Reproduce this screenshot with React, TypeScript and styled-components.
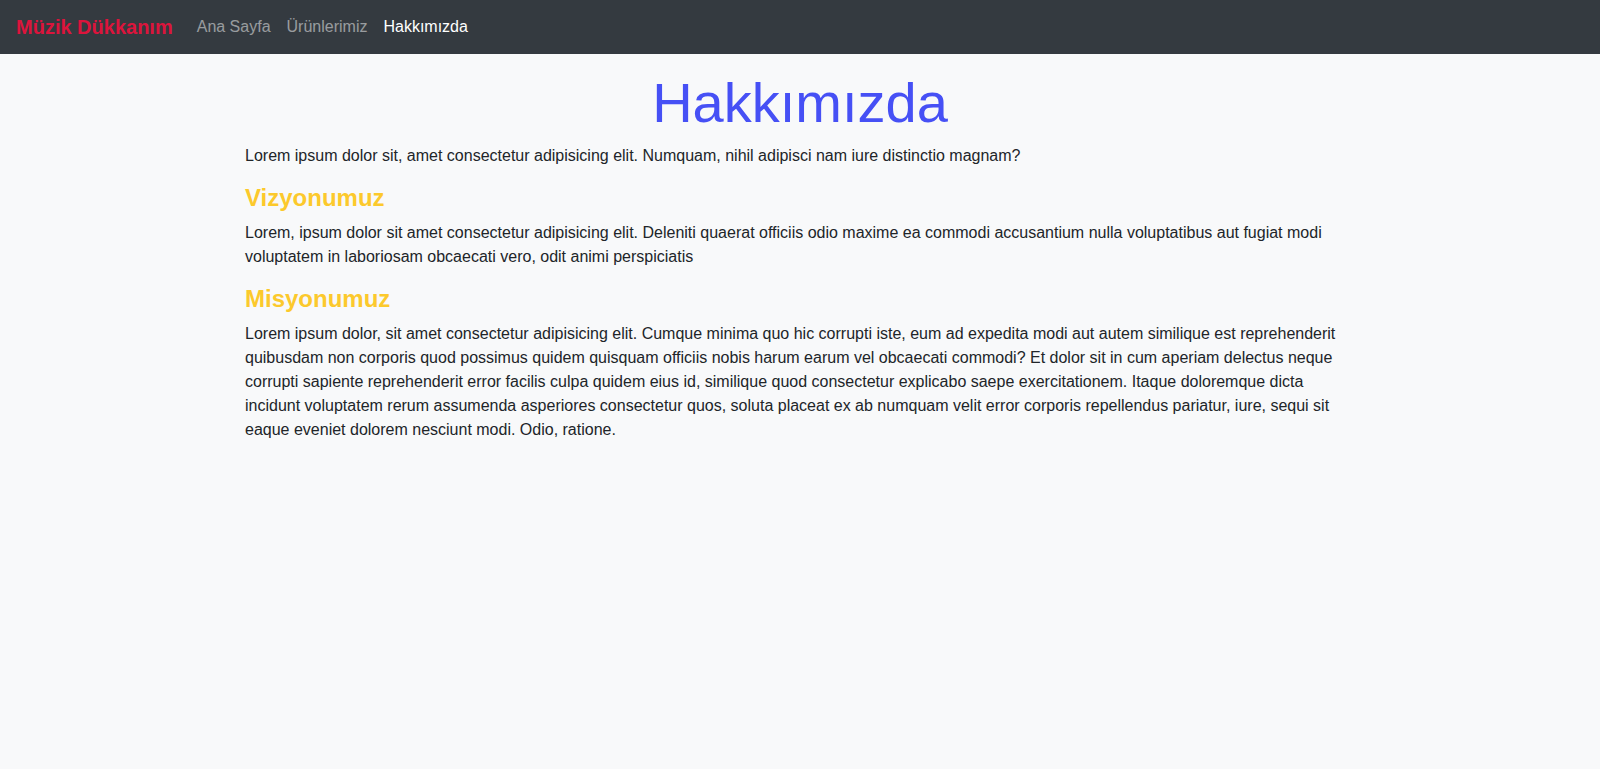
import React from "react";
import styled, { createGlobalStyle } from "styled-components";

const GlobalStyle = createGlobalStyle`
  html, body { margin: 0; padding: 0; }
  body {
    background: #f8f9fa;
    color: #212529;
    font-family: "Liberation Sans", Arial, sans-serif;
    font-size: 16px;
    line-height: 1.5;
  }
  * { box-sizing: border-box; }
`;

const Page = styled.div`
  min-height: 769px;
  background: #f8f9fa;
`;

const Navbar = styled.nav`
  display: flex;
  align-items: center;
  height: 54px;
  padding: 0 16px;
  background: #343a40;
`;

const Brand = styled.a`
  font-size: 20px;
  font-weight: bold;
  color: crimson;
  margin-right: 16px;
  text-decoration: none;
  line-height: 30px;
`;

const NavList = styled.ul`
  display: flex;
  list-style: none;
  margin: 0;
  padding: 0;
`;

const NavLink = styled.a<{ $active?: boolean }>`
  display: block;
  padding: 8px;
  line-height: 24px;
  text-decoration: none;
  color: ${(p) => (p.$active ? "#fff" : "rgba(255,255,255,0.5)")};
`;

const Container = styled.main`
  width: 1140px;
  margin: 0 auto;
  padding: 15px 15px 0;
`;

const Title = styled.h1`
  margin: 0 0 8px;
  text-align: center;
  font-size: 56px;
  font-weight: 300;
  line-height: 1.2;
  color: #4650f5;
`;

const SectionTitle = styled.h4`
  margin: 0 0 8px;
  font-size: 24px;
  font-weight: bold;
  line-height: 1.2;
  color: #fcc92c;
`;

const Text = styled.p`
  margin: 0 0 16px;
`;

export default function App() {
  return (
    <Page>
      <GlobalStyle />
      <Navbar>
        <Brand href="#">Müzik Dükkanım</Brand>
        <NavList>
          <li><NavLink href="#">Ana Sayfa</NavLink></li>
          <li><NavLink href="#">Ürünlerimiz</NavLink></li>
          <li><NavLink href="#" $active>Hakkımızda</NavLink></li>
        </NavList>
      </Navbar>
      <Container>
        <Title>Hakkımızda</Title>
        <Text>
          Lorem ipsum dolor sit, amet consectetur adipisicing elit. Numquam, nihil adipisci nam iure distinctio magnam?
        </Text>
        <SectionTitle>Vizyonumuz</SectionTitle>
        <Text>
          Lorem, ipsum dolor sit amet consectetur adipisicing elit. Deleniti quaerat officiis odio maxime ea commodi accusantium nulla voluptatibus aut fugiat modi voluptatem in laboriosam obcaecati vero, odit animi perspiciatis
        </Text>
        <SectionTitle>Misyonumuz</SectionTitle>
        <Text>
          Lorem ipsum dolor, sit amet consectetur adipisicing elit. Cumque minima quo hic corrupti iste, eum ad expedita modi aut autem similique est reprehenderit quibusdam non corporis quod possimus quidem quisquam officiis nobis harum earum vel obcaecati commodi? Et dolor sit in cum aperiam delectus neque corrupti sapiente reprehenderit error facilis culpa quidem eius id, similique quod consectetur explicabo saepe exercitationem. Itaque doloremque dicta incidunt voluptatem rerum assumenda asperiores consectetur quos, soluta placeat ex ab numquam velit error corporis repellendus pariatur, iure, sequi sit eaque eveniet dolorem nesciunt modi. Odio, ratione.
        </Text>
      </Container>
    </Page>
  );
}
